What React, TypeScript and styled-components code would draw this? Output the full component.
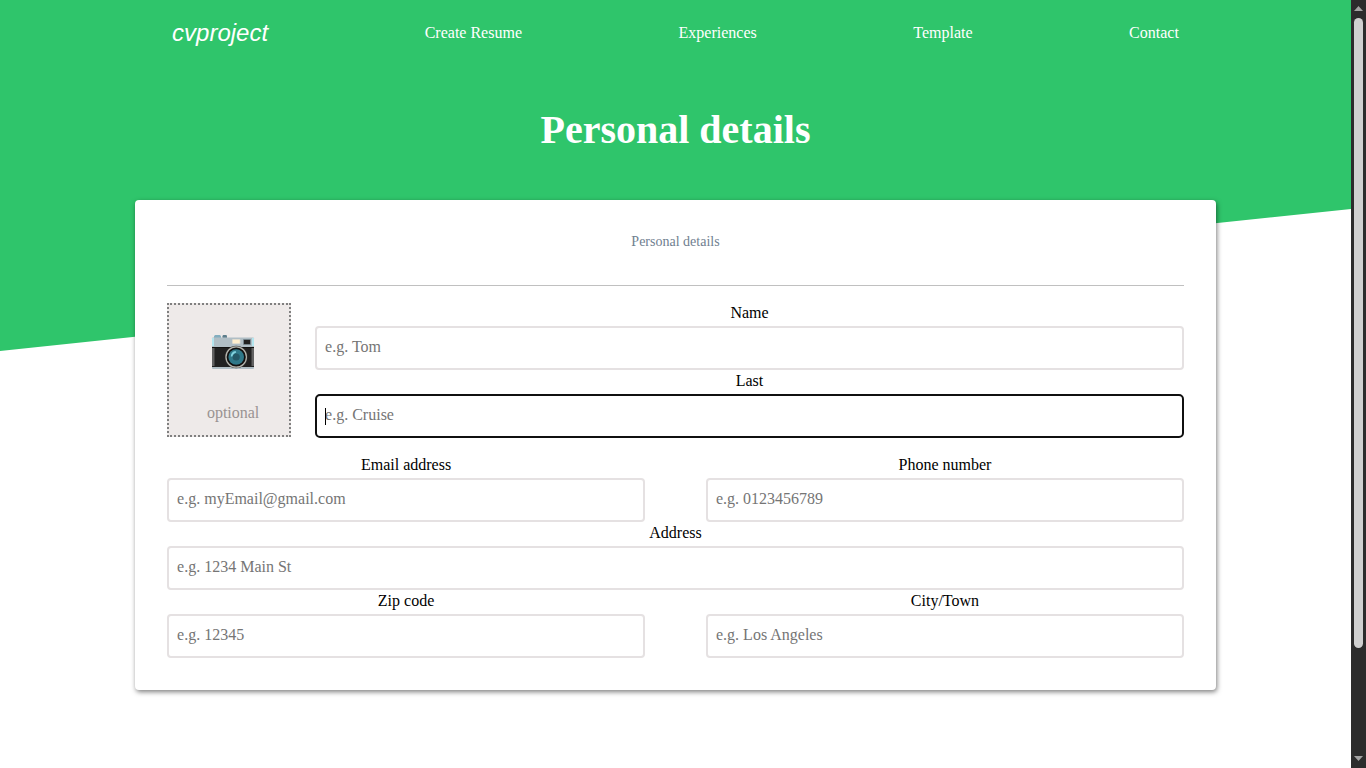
import React from "react";
import styled, { createGlobalStyle } from "styled-components";

const GlobalStyle = createGlobalStyle`
  *, *::before, *::after { box-sizing: border-box; }
  body {
    margin: 0;
    background: #fff;
    color: #000;
    font: 16px/24px "Liberation Serif", "Times New Roman", serif;
  }
`;

const Shell = styled.div`
  display: flex;
  align-items: flex-start;
`;

const Page = styled.div`
  flex: 1;
  min-width: 0;
  min-height: 100vh;
`;

const Hero = styled.header`
  min-height: 351px;
  background: #2fc56b;
  color: #fff;
  clip-path: polygon(0 0, 100% 0, 100% 209px, 0 100%);
`;

const Nav = styled.nav`
  display: flex;
  justify-content: space-between;
  align-items: center;
  width: 80%;
  height: 66px;
  margin: 0 auto;
  padding: 0 37px;
`;

const NavLink = styled.a`
  color: #fff;
  text-decoration: none;
`;

const Logo = styled(NavLink)`
  font: italic 24px/28px "Liberation Sans", Arial, sans-serif;
`;

const Title = styled.h1`
  margin: 40px 0 0;
  font-size: 40px;
  line-height: 48px;
  text-align: center;
`;

const Card = styled.form`
  position: relative;
  width: 80%;
  margin: -151px auto 0;
  padding: 32px;
  background: #fff;
  border-radius: 4px;
  box-shadow: 1px 2px 5px rgba(0, 0, 0, 0.5);
`;

const CardTitle = styled.h2`
  margin: 0 0 16px;
  padding-bottom: 33px;
  border-bottom: 1px solid #c0c0c0;
  color: #708090;
  font-size: 14px;
  font-weight: 400;
  line-height: 20px;
  text-align: center;
`;

const ProfileRow = styled.div`
  display: flex;
  align-items: center;
  gap: 24px;
  margin-bottom: 16px;
`;

const FieldStack = styled.div`
  flex: 1;
`;

const FieldPair = styled.div`
  display: grid;
  grid-template-columns: 47% 47%;
  justify-content: space-between;
`;

const PhotoButton = styled.button`
  display: flex;
  flex-direction: column;
  align-items: center;
  justify-content: space-between;
  width: 124px;
  height: 134px;
  padding: 29px 0 10px 8px;
  border: 2px dotted #808080;
  background: #eeeae9;
  color: #999392;
  font: inherit;
`;

const FieldBox = styled.div`
  display: flex;
  flex-direction: column;
`;

const FieldLabel = styled.label`
  height: 24px;
  line-height: 22px;
  text-align: center;
`;

const InputWrap = styled.div`
  position: relative;
  display: flex;
`;

const TextInput = styled.input<{ $active?: boolean }>`
  width: 100%;
  height: 44px;
  padding: 0 8px 2px;
  border: 2px solid ${(p) => (p.$active ? "#101010" : "#e5e1e2")};
  border-radius: ${(p) => (p.$active ? 5 : 4)}px;
  outline: none;
  background: #fff;
  font: inherit;
  caret-color: ${(p) => (p.$active ? "transparent" : "auto")};

  &:focus { border-color: #101010; }
  &::placeholder { color: #757575; opacity: 1; }
  &:not(:placeholder-shown) + span { display: none; }
`;

const Caret = styled.span`
  position: absolute;
  left: 10px;
  top: 14px;
  width: 1px;
  height: 17px;
  background: #000;
`;

const ScrollTrack = styled.div`
  position: sticky;
  top: 0;
  display: flex;
  flex-direction: column;
  align-items: center;
  width: 15px;
  height: 100vh;
  padding: 6px 0 7px;
  background: #2c2c2c;
`;

const ScrollThumb = styled.div`
  width: 9px;
  height: calc(100% - 125px);
  margin: 7px 0 auto;
  border-radius: 5px;
  background: #d0d0d0;
`;

const Arrow = styled.svg`
  display: block;
  flex: none;
  fill: #a3a3a3;
`;

function Camera() {
  return (
    <svg width="44" height="38" viewBox="0 0 44 38" aria-hidden="true">
      <path d="M3 4V2.5C3 1.5 4 1 5 1h3c1 0 2 .5 2 1.5V4z" fill="#82aebf" />
      <path d="M11.5 4V2.2c0-.7.7-1.2 1.5-1.2h1.6c.8 0 1.4.5 1.4 1.2V4z" fill="#5c7d8b" />
      <rect x="1" y="3.5" width="42" height="31.5" rx="1" fill="#b0bec5" />
      <path d="M1 4h2v8H1zM41 4h2v8h-2z" fill="#b3e5ee" />
      <rect x="1" y="13" width="42" height="20" fill="#212121" />
      <path d="M1 14h2.5v18H1zM40.5 14h2.5v18h-2.5z" fill="#616161" />
      <rect x="1" y="13" width="42" height="1" fill="#111" />
      <rect x="21" y="5" width="8.5" height="5" rx="1" fill="#d5d5cf" />
      <rect x="21.7" y="5.7" width="7" height="3.6" fill="#ffefce" />
      <rect x="32" y="5" width="8" height="6" rx="1" fill="#75848b" />
      <rect x="33" y="6" width="6" height="4" fill="#212121" />
      <circle cx="25.2" cy="23" r="11.2" fill="#424242" />
      <circle cx="25.2" cy="23" r="10.2" fill="#111" stroke="#b5b5ad" strokeWidth="1.2" />
      <circle cx="25.2" cy="23" r="7.8" fill="#2f7889" />
      <circle cx="25.2" cy="23" r="3.6" fill="#245766" />
      <path d="M19.8 22.5c0-3 1.8-5.2 4.8-5.6l.6 1.7c-2 .7-3.4 2-3.8 4z" fill="#82d2df" />
    </svg>
  );
}

interface FieldProps {
  id: string;
  label: string;
  placeholder: string;
  type?: string;
  active?: boolean;
}

function Field({ id, label, placeholder, type = "text", active }: FieldProps) {
  return (
    <FieldBox>
      <FieldLabel htmlFor={id}>{label}</FieldLabel>
      <InputWrap>
        <TextInput id={id} name={id} type={type} placeholder={placeholder} $active={active} autoFocus={active} />
        {active && <Caret />}
      </InputWrap>
    </FieldBox>
  );
}

export default function App() {
  return (
    <>
      <GlobalStyle />
      <Shell>
        <Page>
          <Hero>
            <Nav>
              <Logo href="#home">cvproject</Logo>
              <NavLink href="#create">Create Resume</NavLink>
              <NavLink href="#experiences">Experiences</NavLink>
              <NavLink href="#template">Template</NavLink>
              <NavLink href="#contact">Contact</NavLink>
            </Nav>
            <Title>Personal details</Title>
          </Hero>
          <Card>
            <CardTitle>Personal details</CardTitle>
            <ProfileRow>
              <PhotoButton type="button">
                <Camera />
                optional
              </PhotoButton>
              <FieldStack>
                <Field id="name" label="Name" placeholder="e.g. Tom" />
                <Field id="last" label="Last" placeholder="e.g. Cruise" active />
              </FieldStack>
            </ProfileRow>
            <FieldPair>
              <Field id="email" type="email" label="Email address" placeholder="e.g. myEmail@gmail.com" />
              <Field id="phone" type="tel" label="Phone number" placeholder="e.g. 0123456789" />
            </FieldPair>
            <Field id="address" label="Address" placeholder="e.g. 1234 Main St" />
            <FieldPair>
              <Field id="zip" label="Zip code" placeholder="e.g. 12345" />
              <Field id="city" label="City/Town" placeholder="e.g. Los Angeles" />
            </FieldPair>
          </Card>
        </Page>
        <ScrollTrack aria-hidden="true">
          <Arrow width="9" height="5" viewBox="0 0 9 5"><path d="M4.5 0 9 5H0z" /></Arrow>
          <ScrollThumb />
          <Arrow width="9" height="5" viewBox="0 0 9 5"><path d="M0 0h9L4.5 5z" /></Arrow>
        </ScrollTrack>
      </Shell>
    </>
  );
}
